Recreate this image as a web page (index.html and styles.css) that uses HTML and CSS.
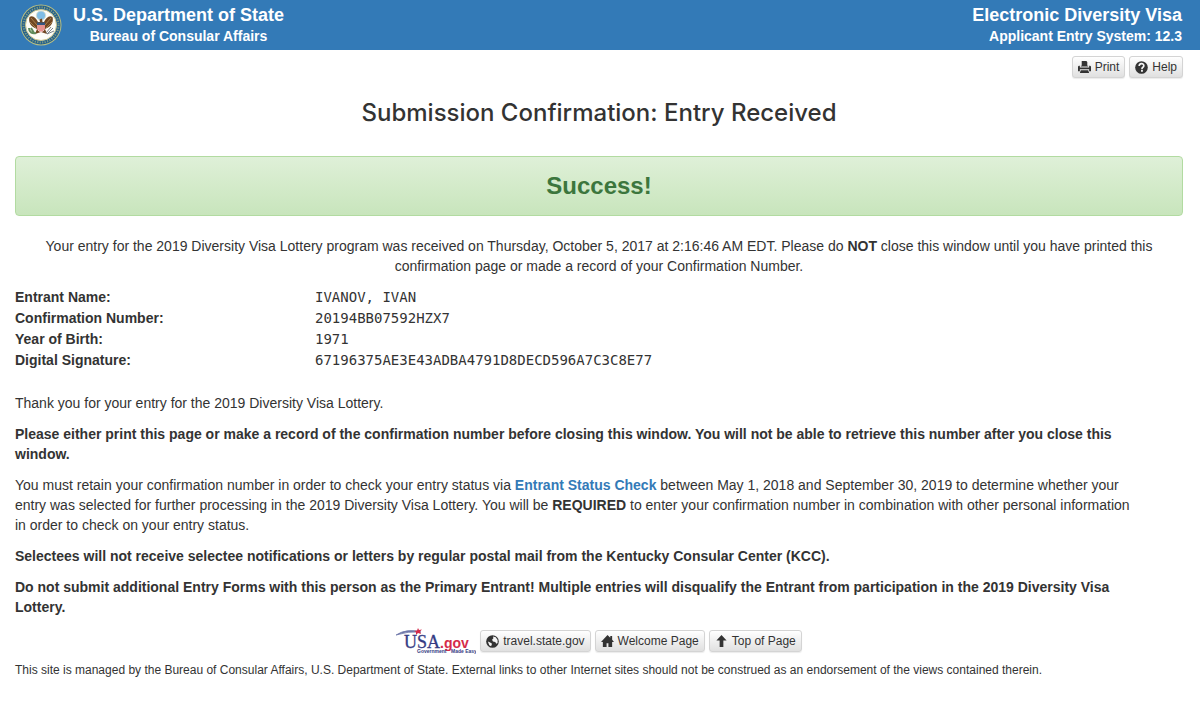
FILE: index.html
```
<!DOCTYPE html>
<html lang="en">
<head>
    <meta charset="UTF-8">
    <meta name="viewport" content="width=device-width, initial-scale=1.0">
    <title>Submission Confirmation: Entry Received</title>
    <link rel="stylesheet" href="styles.css">
</head>
<body>
    <!-- Site header -->
    <header class="site-header" id="top">
        <div class="brand">
            <svg class="seal" viewBox="0 0 42 42" aria-hidden="true">
                <circle cx="21" cy="21" r="20.5" fill="#b9bf83"/>
                <circle cx="21" cy="21" r="19.5" fill="#24608c"/>
                <circle cx="21" cy="21" r="17.5" fill="none" stroke="#7f9c84" stroke-width="2" stroke-dasharray="1.2 1.3"/>
                <circle cx="21" cy="21" r="15.5" fill="#fdfdf8" stroke="#c9c48b"/>
                <circle cx="21" cy="11.5" r="4.6" fill="#7fbde6" stroke="#d5dfd3"/>
                <path d="M18 18 C16 14 13 11 9.500 13 C8 18 11 23 17 25 L15 30 L21 28 L27 30 L25 25 C31 23 34 18 32.500 13 C29 11 26 14 24 18 L22.500 18 L22 14.500 L19.500 15.500 L20 18 Z" fill="#714721"/>
                <path d="M11 14 L17 21 M10 18 L16 24 M31 14 L25 21 M32 18 L26 24" stroke="#b5905d" stroke-width=".8"/>
                <path d="M17 19 H25 V24 Q24.500 27 21 28.500 Q17.500 27 17 24 Z" fill="#f2dfdc"/>
                <path d="M18 21 V26 M20 21 V27.500 M22 21 V27.500 M24 21 V26" stroke="#e0605c" stroke-width="1.2"/>
                <path d="M17 18.500 H25 V21 H17 Z" fill="#34567f"/>
                <path d="M9 24 C9 28 12 30 16 29 M11 24 L14 29" fill="none" stroke="#5f8b5b" stroke-width="2"/>
                <path d="M33 24 L27 30 M31 23 L26 29 M34 27 L27 30" fill="none" stroke="#7d8489"/>
            </svg>
            <div class="brand-text">
                <div class="header-title">U.S. Department of State</div>
                <div class="header-subtitle">Bureau of Consular Affairs</div>
            </div>
        </div>
        <div class="system">
            <div class="header-title">Electronic Diversity Visa</div>
            <div class="header-subtitle">Applicant Entry System: 12.3</div>
        </div>
    </header>

    <div class="container">
        <div class="toolbar">
            <button type="button" class="btn" onclick="window.print()">
                <svg class="icon" viewBox="0 0 14 14" aria-hidden="true"><path d="M4 0h5l1 1v4h1v1H3V5h1z"/><path d="M1 5h1v2h10V5h1l1 1v5h-2V9H2v2H0V6z"/><path d="M3 10h8l1 3H2z"/></svg>
                Print
            </button>
            <button type="button" class="btn">
                <svg class="icon" viewBox="0 0 14 14" aria-hidden="true"><circle cx="7" cy="7" r="6.8"/><path d="M4.500 5.500C4.500 2 9.500 2 9.500 5c0 2-2 1.500-2 3.500" fill="none" stroke="#f5f5f5" stroke-width="1.8"/><path d="M6.500 9.500h2v2h-2z" fill="#f5f5f5"/></svg>
                Help
            </button>
        </div>

        <main>
            <h1>Submission Confirmation: Entry Received</h1>
            <div class="alert">Success!</div>

            <p class="received">Your entry for the 2019 Diversity Visa Lottery program was received on Thursday, October 5, 2017 at 2:16:46 AM EDT. Please do <strong>NOT</strong> close this window until you have printed this confirmation page or made a record of your Confirmation Number.</p>

            <!-- Entry details -->
            <dl class="details">
                <dt>Entrant Name:</dt>
                <dd>IVANOV, IVAN</dd>
                <dt>Confirmation Number:</dt>
                <dd>20194BB07592HZX7</dd>
                <dt>Year of Birth:</dt>
                <dd>1971</dd>
                <dt>Digital Signature:</dt>
                <dd>67196375AE3E43ADBA4791D8DECD596A7C3C8E77</dd>
            </dl>

            <div class="notes">
                <p>Thank you for your entry for the 2019 Diversity Visa Lottery.</p>
                <p><strong>Please either print this page or make a record of the confirmation number before closing this window. You will not be able to retrieve this number after you close this window.</strong></p>
                <p>You must retain your confirmation number in order to check your entry status via <a href="#">Entrant Status Check</a> between May 1, 2018 and September 30, 2019 to determine whether your entry was selected for further processing in the 2019 Diversity Visa Lottery. You will be <strong>REQUIRED</strong> to enter your confirmation number in combination with other personal information in order to check on your entry status.</p>
                <p><strong>Selectees will not receive selectee notifications or letters by regular postal mail from the Kentucky Consular Center (KCC).</strong></p>
                <p><strong>Do not submit additional Entry Forms with this person as the Primary Entrant! Multiple entries will disqualify the Entrant from participation in the 2019 Diversity Visa Lottery.</strong></p>
            </div>
        </main>

        <!-- Footer -->
        <footer>
            <nav class="footer-links">
                <a href="#" class="usa-gov" aria-label="USA.gov">
                    <svg viewBox="0 0 80 26" aria-hidden="true">
                        <path d="M0 7 Q11 0 25 4 Q12 3 0 7Z" fill="#7078aa" stroke="#7078aa" stroke-width=".8"/>
                        <text x="8" y="20" class="usa-text">USA</text>
                        <text x="44" y="20" class="gov-text">.gov</text>
                        <path d="M22 0l1 2 3-.5-2 2 1 2.500-3-1-2 2v-3l-2-1 3-.5z" fill="#d52b4a"/>
                        <text x="21" y="25" class="tagline">Government</text>
                        <text x="55" y="25" class="tagline">Made Easy</text>
                    </svg>
                </a>
                <a href="#" class="btn">
                    <svg class="icon" viewBox="0 0 14 14" aria-hidden="true"><circle cx="7" cy="7" r="6.8"/><path d="M7.500 1.500l3 1 2 3v3l-1.500 1-1-2-2.500-.5-1-2 1.500-1.500zM2 7l2.500 1 2 1.500-1 2.500-2-1z" fill="#f5f5f5"/></svg>
                    travel.state.gov
                </a>
                <a href="#" class="btn">
                    <svg class="icon" viewBox="0 0 14 14" aria-hidden="true"><path d="M7 0l3 3V1h2v4l2 2.500h-2V13H8V9H6v4H2V7.500H0z"/></svg>
                    Welcome Page
                </a>
                <a href="#top" class="btn">
                    <svg class="icon" viewBox="0 0 14 14" aria-hidden="true"><path d="M7 0l5.500 6H9v7H5V6H1.500z"/></svg>
                    Top of Page
                </a>
            </nav>
            <p class="disclaimer">This site is managed by the Bureau of Consular Affairs, U.S. Department of State. External links to other Internet sites should not be construed as an endorsement of the views contained therein.</p>
        </footer>
    </div>
</body>
</html>
```
FILE: styles.css
```
* {
    box-sizing: border-box;
}

body {
    margin: 0;
    background-color: #fff;
    color: #333;
    font-family: "Helvetica Neue", Helvetica, "Liberation Sans", Arial, sans-serif;
    font-size: 14px;
    line-height: 20px;
}

/* Header */
.site-header {
    display: flex;
    justify-content: space-between;
    align-items: center;
    padding: 4px 18px 4px 20px;
    background-color: #337ab7;
    color: #fff;
    font-weight: bold;
}

.brand {
    display: flex;
    align-items: center;
    gap: 11px;
}

.seal {
    width: 42px;
    height: 42px;
}

.brand-text {
    text-align: center;
}

.system {
    text-align: right;
}

.header-title {
    font-size: 18px;
    line-height: 22px;
}

.header-subtitle {
    font-size: 14px;
    line-height: 20px;
}

/* Page content */
.container {
    padding: 6px 17px 0 15px;
}

.toolbar {
    display: flex;
    justify-content: flex-end;
    gap: 4px;
}

.btn {
    display: inline-flex;
    align-items: center;
    gap: 4px;
    padding: 0 5px;
    border: 1px solid #d4d4d4;
    border-radius: 3px;
    background-image: linear-gradient(#fff, #e0e0e0);
    box-shadow: 0 1px 1px rgba(0, 0, 0, 0.08);
    color: #333;
    font-family: inherit;
    font-size: 12px;
    font-weight: normal;
    line-height: 20px;
    text-decoration: none;
    cursor: pointer;
}

.icon {
    width: 13px;
    height: 13px;
    fill: #333;
}

h1 {
    margin: 20px 0 28px;
    font-family: Inter, "Helvetica Neue", sans-serif;
    font-size: 24px;
    font-weight: 500;
    line-height: 30px;
    text-align: center;
}

.alert {
    margin-bottom: 20px;
    padding: 14px;
    border: 1px solid #b2dba1;
    border-radius: 4px;
    background-image: linear-gradient(#dff0d8, #c8e5bc);
    color: #3c763d;
    font-size: 24px;
    font-weight: bold;
    line-height: 30px;
    text-align: center;
}

p {
    margin: 0 0 11px;
}

.received {
    text-align: center;
}

.details {
    display: grid;
    grid-template-columns: 300px 1fr;
    margin: 0 0 22px;
    line-height: 21px;
}

.details dt {
    font-weight: bold;
}

.details dd {
    margin: 0;
    font-family: Menlo, Monaco, Consolas, "DejaVu Sans Mono", monospace;
}

.notes {
    padding-right: 43px;
}

a {
    color: #337ab7;
    font-weight: bold;
    text-decoration: none;
}

/* Footer */
.footer-links {
    display: flex;
    justify-content: center;
    align-items: center;
    gap: 4px;
}

.usa-gov svg {
    display: block;
    width: 80px;
    height: 26px;
}

.usa-text {
    fill: #343b83;
    stroke: #343b83;
    stroke-width: 0.3px;
    font: 18px "Liberation Serif", serif;
}

.gov-text {
    fill: #d52b4a;
    font: bold 14px "Liberation Sans", sans-serif;
}

.tagline {
    fill: #343b83;
    font: bold 5px "Liberation Sans", sans-serif;
}

.disclaimer {
    margin: 6px 0 0;
    font-size: 12px;
}
```
